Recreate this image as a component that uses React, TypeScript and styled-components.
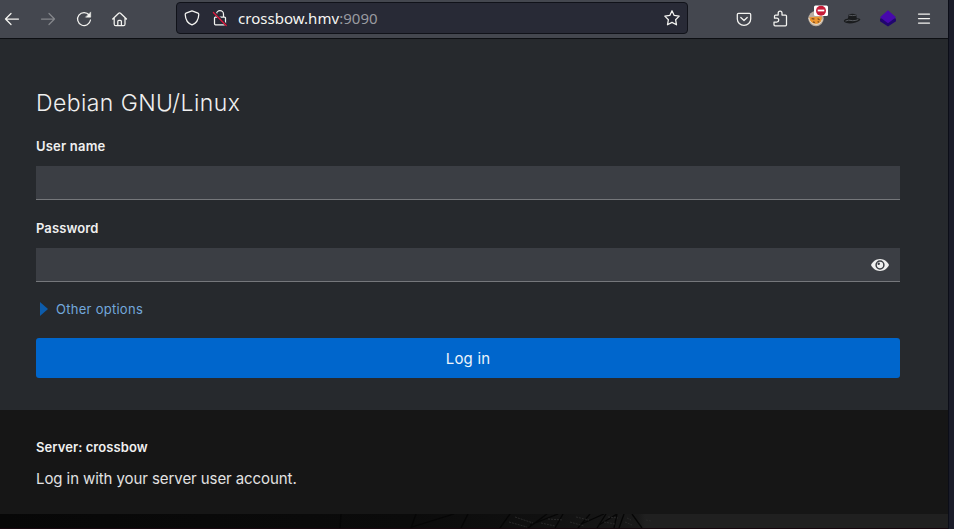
import React from "react";
import styled, { createGlobalStyle } from "styled-components";

const GlobalStyle = createGlobalStyle`
  * { box-sizing: border-box; }
  body { margin: 0; background: #1a1c29; font-family: "Inter", "Liberation Sans", sans-serif; }
`;

const Desktop = styled.div`
  width: 954px;
  height: 529px;
  overflow: hidden;
  background: #1a1c29;
`;

const Browser = styled.div`
  width: 949px;
  height: 529px;
  display: flex;
  flex-direction: column;
  border-right: 1px solid #0b0d17;
`;

const Toolbar = styled.header`
  height: 39px;
  flex: none;
  display: flex;
  align-items: flex-start;
  background: #44474f;
  border-bottom: 1px solid #0d0f13;
`;

const ToolGroup = styled.div<{ $width: number; $pad: number }>`
  width: ${(p) => p.$width}px;
  padding-left: ${(p) => p.$pad}px;
  height: 37px;
  display: flex;
  align-items: center;
  gap: 16px;
  flex: none;
`;

const ToolButton = styled.button<{ $dim?: boolean }>`
  width: 20px;
  height: 20px;
  padding: 0;
  border: 0;
  background: none;
  color: ${(p) => (p.$dim ? "#84868b" : "#f4f4f1")};
  display: grid;
  place-items: center;
  flex: none;
  svg { display: block; overflow: visible; }
`;

const UrlBar = styled.div`
  width: 512px;
  height: 32px;
  margin-top: 2px;
  padding: 0 5px;
  display: flex;
  align-items: center;
  gap: 8px;
  background: #282a36;
  border: 1px solid #101219;
  border-radius: 4px;
`;

const Url = styled.div`
  flex: 1;
  font: 15px/20px "Noto Sans", sans-serif;
  letter-spacing: 0.04px;
  color: #f6f6f2;
  span { color: #999aa0; }
`;

const LoginPane = styled.main`
  height: 371px;
  flex: none;
  padding: 49px 48px 0 36px;
  display: flex;
  flex-direction: column;
  background: #26292d;
`;

const Heading = styled.h1`
  margin: 0;
  height: 30px;
  font-size: 23px;
  line-height: 30px;
  font-weight: 300;
  letter-spacing: 0.42px;
  color: #f0f0f0;
`;

const Label = styled.label<{ $spacing: number }>`
  margin-top: 18px;
  height: 20px;
  font-size: 13px;
  line-height: 20px;
  font-weight: 600;
  letter-spacing: ${(p) => p.$spacing}px;
  color: #f0f0f0;
`;

const Field = styled.div`
  margin-top: 10px;
  height: 34px;
  display: flex;
  background: #3b3e44;
  border-bottom: 1px solid #75777b;
`;

const Input = styled.input`
  flex: 1;
  padding: 0 8px;
  border: 0;
  outline: 0;
  background: transparent;
  color: #fff;
`;

const RevealButton = styled.button`
  width: 38px;
  padding: 0 0 0 8px;
  border: 0;
  background: none;
  color: #f0f0f0;
  display: flex;
  align-items: center;
`;

const Options = styled.button`
  margin: 16px 0 0;
  padding: 0 0 0 4px;
  height: 22px;
  border: 0;
  background: none;
  display: flex;
  align-items: center;
  gap: 8px;
  font: 400 13px/22px "Inter", sans-serif;
  letter-spacing: 0.27px;
  color: #73a8dc;
`;

const LoginButton = styled.button`
  margin-top: 18px;
  height: 40px;
  padding: 1px 0 0;
  border: 0;
  border-radius: 3px;
  background: #0066cc;
  color: #edf4fb;
  font: 400 15px/24px "Inter", sans-serif;
  letter-spacing: 0.2px;
`;

const ServerInfo = styled.section`
  height: 104px;
  flex: none;
  padding: 27px 36px 0;
  background: #161616;
`;

const ServerName = styled.div`
  height: 20px;
  font-size: 13px;
  line-height: 20px;
  font-weight: 600;
  letter-spacing: 0.07px;
  color: #f0f0f0;
`;

const ServerText = styled.p`
  margin: 10px 0 0;
  font-size: 15px;
  line-height: 23px;
  letter-spacing: -0.08px;
  color: #e2e2e2;
`;

const Backdrop = styled.div`
  flex: 1;
  border-bottom: 1px solid #17070e;
  background: linear-gradient(90deg, #070707 0, #0b0b0b 410px, #101010 540px, #191919 638px, #202020 645px, #202020 100%);
  svg { display: block; }
`;

const stroke = { fill: "none", stroke: "currentColor", strokeWidth: 1.25, strokeLinecap: "round", strokeLinejoin: "round" } as const;

const Icon = ({ children }: { children: React.ReactNode }) => (
  <svg width="20" height="20" viewBox="0 0 20 20" {...stroke}>{children}</svg>
);

export default function App() {
  return (
    <>
      <GlobalStyle />
      <Desktop>
        <Browser>
          <Toolbar>
            <ToolGroup $width={176} $pad={2}>
              <ToolButton aria-label="Back"><Icon><path d="M9 4.5 3.5 10 9 15.5M3.5 10h13" /></Icon></ToolButton>
              <ToolButton aria-label="Forward" $dim><Icon><path d="M11 4.5 16.5 10 11 15.5M16.5 10h-13" /></Icon></ToolButton>
              <ToolButton aria-label="Reload">
                <Icon><path d="M15.2 6A6.5 6.5 0 1 0 16.5 11" /><path d="M16.7 3.3v4.9h-4.9z" fill="currentColor" strokeWidth=".5" /></Icon>
              </ToolButton>
              <ToolButton aria-label="Home">
                <Icon><path d="m2.7 10 6-5.8q.9-.8 1.8 0l6 5.8M4.200 8.800v6.100q0 1.800 1.500 1.800h7.800q1.500 0 1.500-1.800V8.800M7.800 16.400v-4q0-1 1-1h1.600q1 0 1 1v4" /></Icon>
              </ToolButton>
            </ToolGroup>
            <UrlBar>
              <ToolButton aria-label="Tracking protection">
                <Icon><path d="m10 2.9 6 2.2q.8.3.8 1.3c-.2 4.5-2 8.8-6.8 10.5-4.8-1.7-6.6-6-6.8-10.5q0-1 .8-1.3z" /></Icon>
              </ToolButton>
              <ToolButton aria-label="Connection not secure">
                <Icon>
                  <path d="M6.5 8.7V6.2a3.5 3.5 0 0 1 7 0v2.5M5.5 9h9q1 0 1 1v5.8q0 1-1 1h-9q-1 0-1-1V10q0-1 1-1" />
                  <path d="m4 4.4 12.5 13" stroke="#282a36" strokeWidth="2.6" />
                  <path d="m3.4 4.5 12.8 13" stroke="#e2183d" />
                </Icon>
              </ToolButton>
              <Url>crossbow.hmv<span>:9090</span></Url>
              <ToolButton aria-label="Bookmark">
                <Icon><path d="m10 2.7 2.2 4.7 5 .7-3.6 3.6.9 5.1-4.5-2.4-4.5 2.4.9-5.1-3.6-3.6 5-.7z" /></Icon>
              </ToolButton>
            </UrlBar>
            <ToolGroup $width={260} $pad={46}>
              <ToolButton aria-label="Pocket">
                <Icon><path d="M4.5 4.3h11q1.2 0 1.2 1.2V10a6.7 6.4 0 0 1-13.4 0V5.500q0-1.200 1.200-1.200M6.800 8.500l3.200 3 3.200-3" /></Icon>
              </ToolButton>
              <ToolButton aria-label="Extensions">
                <Icon><path d="M5 16.8h10.500q1 0 1-1V7q0-1-1-1H12V4a1.900 1.900 0 0 0-3.800 0v2H5.500q-1 0-1 1v2.200h2.300a1.900 1.900 0 0 1 0 3.800H4v2.800q0 1 1 1" /></Icon>
              </ToolButton>
              <ToolButton aria-label="Cookie manager">
                <svg width="20" height="20" viewBox="0 0 20 20">
                  <circle cx="10" cy="9.6" r="7.7" fill="#b9ada0" />
                  <path d="M3.4 8.200 16 7.600l-.7 4.300-3.600 3-4.700-.3-3.200-2.700z" fill="#ed9630" />
                  <path d="m5.600 9.700 2.800.3m3.200-.5 2 1.500m-6.700 1.800 2 .8m2.700-1 1.500.5" stroke="#84501f" strokeWidth="1.3" />
                  <path d="M2.800 8.800q1 5.800 7 6.700 5-.1 6.600-5" fill="none" stroke="#e9dac6" />
                  <rect x="8" y="-3.500" width="14" height="10.500" rx="1.500" fill="#fff" />
                  <circle cx="15" cy="1.800" r="5" fill="#c71c38" />
                  <path d="M11.700 1.500h6.600" stroke="#fff" strokeWidth="1.800" />
                </svg>
              </ToolButton>
              <ToolButton aria-label="Hat">
                <svg width="20" height="20" viewBox="0 0 20 20">
                  <path d="m6 9.500.6-4q3.800-1.500 7.600 0l.6 3.700q3 .2 3.600 1-.5 2-4.800 3.200-5.100 1.700-9 .7-3.100-.8-2.700-2.500.5-1.600 4.100-2.100" fill="#1a1c1e" />
                  <path d="M3.500 12q2.700-1.500 7.300-.3 3.500-.1 5.500-1.200M7 6.200q3.500.8 7 0" fill="none" stroke="#55585d" />
                </svg>
              </ToolButton>
              <ToolButton aria-label="Layers">
                <svg width="20" height="20" viewBox="0 0 20 20">
                  <path d="m2 9.800 8-3.200 8 3.200v2.500L10 17.500l-8-5.200z" fill="#21066f" />
                  <path d="m10 1.300 8 7-8 6-8-6z" fill="#4708ac" />
                </svg>
              </ToolButton>
              <ToolButton aria-label="Menu"><Icon><path d="M4.500 5h11M4.500 9.500h11M4.500 14h11" /></Icon></ToolButton>
            </ToolGroup>
          </Toolbar>

          <LoginPane>
            <Heading>Debian GNU/Linux</Heading>
            <Label htmlFor="user" $spacing={0.2}>User name</Label>
            <Field><Input id="user" /></Field>
            <Label htmlFor="password" $spacing={0.1}>Password</Label>
            <Field>
              <Input id="password" type="password" />
              <RevealButton aria-label="Show password">
                <svg width="20" height="18" viewBox="0 0 20 18">
                  <path d="M10 3C5.700 3 2.500 5.800 1 9c1.500 3.200 4.700 6 9 6s7.500-2.800 9-6c-1.500-3.200-4.700-6-9-6" fill="currentColor" />
                  <circle cx="10" cy="9" r="3.900" fill="none" stroke="#3b3e44" strokeWidth="1.500" />
                  <circle cx="8.700" cy="7.700" r="1.200" fill="#3b3e44" />
                </svg>
              </RevealButton>
            </Field>
            <Options>
              <svg width="8" height="14" viewBox="0 0 8 14"><path d="M0 0v14l8-7z" fill="#0d5cab" /></svg>
              <span>Other options</span>
            </Options>
            <LoginButton>Log in</LoginButton>
          </LoginPane>

          <ServerInfo>
            <ServerName>Server: crossbow</ServerName>
            <ServerText>Log in with your server user account.</ServerText>
          </ServerInfo>

          <Backdrop>
            <svg width="948" height="14" viewBox="0 0 948 14" fill="none" stroke="#060606" strokeWidth="1.300">
              <path d="m341 0-1 14M416 0l-5 14M412 13l42-13M468 0l-7 14M510 0l-10 14M547 0 528 14M563 0l-8 14M590 0l-12 14M606 0l-9 14M617 0l-3 14M624 0l-5 14M632 0l10 14M530 11 558 0M579 11 604 0M599 11 617 0" />
              <path d="m515 3 18 6m-24-1 18 5m21-8 15 1m-22 3 14 3m21-9 13 3m-19 2 14 4m24-9 10 1m-14 4 11 2m12-6 4 2m-6 2 7 3m14-5 5 1" stroke="#292929" strokeWidth="1" strokeDasharray="2 1" />
            </svg>
          </Backdrop>
        </Browser>
      </Desktop>
    </>
  );
}
